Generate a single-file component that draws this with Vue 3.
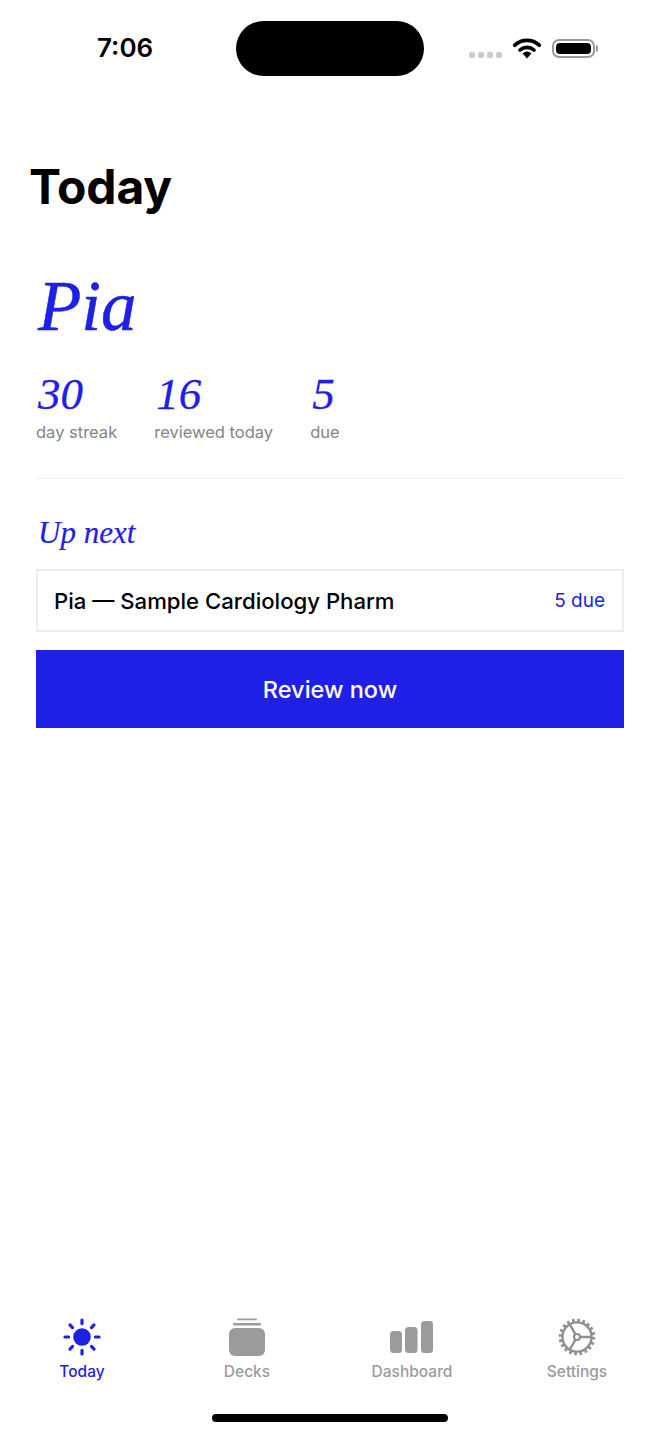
<script setup>
const stats = [
  { value: 30, label: "day streak" },
  { value: 16, label: "reviewed today" },
  { value: 5, label: "due" },
];

const tabs = ["Today", "Decks", "Dashboard", "Settings"];
const rays = [0, 45, 90, 135, 180, 225, 270, 315];
</script>

<template>
  <div class="screen">
    <header class="status-bar">
      <span class="clock">7:06</span>
      <div class="island"></div>
      <div class="status-icons">
        <span class="signal"><i v-for="n in 4" :key="n"></i></span>
        <svg class="wifi" width="30" height="22" viewBox="0 0 30 22">
          <path d="M2.8 8.2a18 18 0 0 1 24.4 0" fill="none" stroke="#000" stroke-width="3.8" stroke-linecap="round" />
          <path d="M8 13a10.5 10.5 0 0 1 14 0" fill="none" stroke="#000" stroke-width="3.6" stroke-linecap="round" />
          <path d="M10.6 16.4a6.2 6.2 0 0 1 8.8 0L15 21.5z" fill="#000" />
        </svg>
        <div class="battery"><div class="battery-fill"></div></div>
        <div class="battery-cap"></div>
      </div>
    </header>

    <main class="content">
      <h1 class="page-title">Today</h1>
      <div class="hero-name">Pia</div>
      <div class="stats">
        <div v-for="s in stats" :key="s.label" class="stat">
          <div class="stat-value">{{ s.value }}</div>
          <div class="stat-label">{{ s.label }}</div>
        </div>
      </div>
      <hr class="divider" />
      <h2 class="section-title">Up next</h2>
      <div class="deck-row">
        <span class="deck-name">Pia — Sample Cardiology Pharm</span>
        <span class="deck-due">5 due</span>
      </div>
      <button class="review-btn">Review now</button>
    </main>

    <nav class="tab-bar">
      <div v-for="(tab, i) in tabs" :key="tab" class="tab" :class="{ active: i === 0 }">
        <svg v-if="i === 0" width="40" height="40" viewBox="0 0 40 40">
          <circle cx="20" cy="20" r="8.8" fill="#1f20e6" />
          <g v-for="r in rays" :key="r" :transform="`rotate(${r} 20 20)`">
            <line x1="20" y1="3" x2="20" y2="6.6" stroke="#1f20e6" stroke-width="3.2" stroke-linecap="round" />
          </g>
        </svg>
        <svg v-else-if="i === 1" width="40" height="40" viewBox="0 0 40 40">
          <rect x="10" y="1.4" width="20" height="1.8" rx="0.9" fill="#9b9b9b" />
          <rect x="6" y="6" width="28" height="2.4" rx="1.2" fill="#9b9b9b" />
          <rect x="2" y="11" width="36" height="28" rx="6" fill="#9b9b9b" />
        </svg>
        <svg v-else-if="i === 2" width="44" height="40" viewBox="0 0 44 40">
          <rect x="0" y="14" width="12" height="22" rx="3.5" fill="#9b9b9b" />
          <rect x="15" y="10" width="12.5" height="26" rx="3.5" fill="#9b9b9b" />
          <rect x="31" y="4" width="12" height="32" rx="3.5" fill="#9b9b9b" />
        </svg>
        <svg v-else width="40" height="40" viewBox="0 0 40 40">
          <circle cx="20" cy="20" r="14.6" fill="none" stroke="#8f8f8f" stroke-width="2.4" />
          <circle cx="20" cy="20" r="16.6" fill="none" stroke="#8f8f8f" stroke-width="3.4" stroke-dasharray="2.6 2.6" />
          <circle cx="20" cy="20" r="3" fill="none" stroke="#8f8f8f" stroke-width="2.2" />
          <path d="M23 20h12M18.5 17.4l-6-10.4M18.5 22.6l-6 10.4" fill="none" stroke="#8f8f8f" stroke-width="2.4" />
        </svg>
        <span class="tab-label">{{ tab }}</span>
      </div>
    </nav>

    <div class="home-indicator"></div>
  </div>
</template>

<style>
body {
  background: #fff;
}
</style>

<style scoped>
.screen {
  width: 660px;
  height: 1434px;
  display: flex;
  flex-direction: column;
  background: #fff;
  font-family: Inter, "Liberation Sans", sans-serif;
  overflow: hidden;
  position: relative;
}

.status-bar {
  height: 96px;
  flex: none;
  position: relative;
}
.clock {
  position: absolute;
  left: 97px;
  top: 31px;
  font-size: 26px;
  line-height: 34px;
  font-weight: 600;
  color: #000;
}
.island {
  position: absolute;
  left: 236px;
  top: 21px;
  width: 188px;
  height: 55px;
  border-radius: 28px;
  background: #000;
}
.status-icons {
  position: absolute;
  left: 469px;
  top: 37px;
  display: flex;
  align-items: center;
}
.signal {
  display: flex;
  gap: 3px;
  margin-top: 14px;
  margin-right: 10px;
}
.signal i {
  width: 6px;
  height: 6px;
  border-radius: 2px;
  background: #cbcbcb;
}
.wifi {
  margin-right: 10px;
}
.battery {
  box-sizing: content-box;
  width: 35px;
  height: 11px;
  border: 2px solid #9a9a9a;
  border-radius: 7px;
  padding: 2px;
}
.battery-fill {
  width: 100%;
  height: 100%;
  background: #000;
  border-radius: 4px;
}
.battery-cap {
  width: 2px;
  height: 7px;
  background: #9a9a9a;
  border-radius: 0 2px 2px 0;
  margin-left: 1px;
}

.content {
  flex: 1;
  padding: 0 36px;
  display: flex;
  flex-direction: column;
}
.page-title {
  margin: 63px 0 0 -7px;
  font-size: 48px;
  line-height: 56px;
  font-weight: 700;
  letter-spacing: -0.2px;
  color: #000;
}
.hero-name {
  margin-top: 47px;
  margin-left: 2px;
  font-family: "Liberation Serif", serif;
  font-style: italic;
  font-size: 71px;
  line-height: 88px;
  color: #1f20e6;
  -webkit-text-stroke: 0.5px #1f20e6;
}
.stats {
  display: flex;
  gap: 37px;
  margin-top: 19px;
}
.stat-value {
  margin-left: 2px;
  font-family: "Liberation Serif", serif;
  font-style: italic;
  font-size: 45px;
  line-height: 50px;
  color: #1f20e6;
  -webkit-text-stroke: 0.3px #1f20e6;
}
.stat-label {
  margin-top: 3px;
  font-size: 16.5px;
  line-height: 20px;
  color: #858585;
}
.divider {
  margin: 36px 0 0;
  border: 0;
  height: 1px;
  background: #f1f1f1;
}
.section-title {
  margin: 35px 0 1px 2px;
  font-family: "Liberation Serif", serif;
  font-style: italic;
  font-weight: 400;
  font-size: 31px;
  line-height: 38px;
  color: #1f20e6;
  -webkit-text-stroke: 0.2px #1f20e6;
}
.deck-row {
  margin-top: 16px;
  height: 63px;
  box-sizing: border-box;
  border: 2px solid #ededed;
  padding: 0 17px 0 16px;
  display: flex;
  align-items: center;
  justify-content: space-between;
}
.deck-name {
  font-size: 22.15px;
  font-weight: 500;
  color: #000;
}
.deck-due {
  font-size: 19px;
  color: #1f20e6;
}
.review-btn {
  margin-top: 18px;
  height: 78px;
  border: 0;
  background: #1f20e6;
  color: #fff;
  font-family: inherit;
  font-size: 23.5px;
  font-weight: 500;
}

.tab-bar {
  flex: none;
  height: 134px;
  margin-left: -0.5px;
  display: grid;
  grid-template-columns: repeat(4, 165px);
  align-items: start;
}
.tab {
  display: flex;
  flex-direction: column;
  align-items: center;
  color: #9b9b9b;
  padding-top: 17px;
}
.tab.active {
  color: #1f20e6;
}
.tab-label {
  margin-top: 5px;
  font-size: 15.5px;
  line-height: 20px;
  font-weight: 500;
}
.home-indicator {
  position: absolute;
  left: 212px;
  bottom: 12px;
  width: 236px;
  height: 8px;
  border-radius: 4px;
  background: #000;
}
</style>
